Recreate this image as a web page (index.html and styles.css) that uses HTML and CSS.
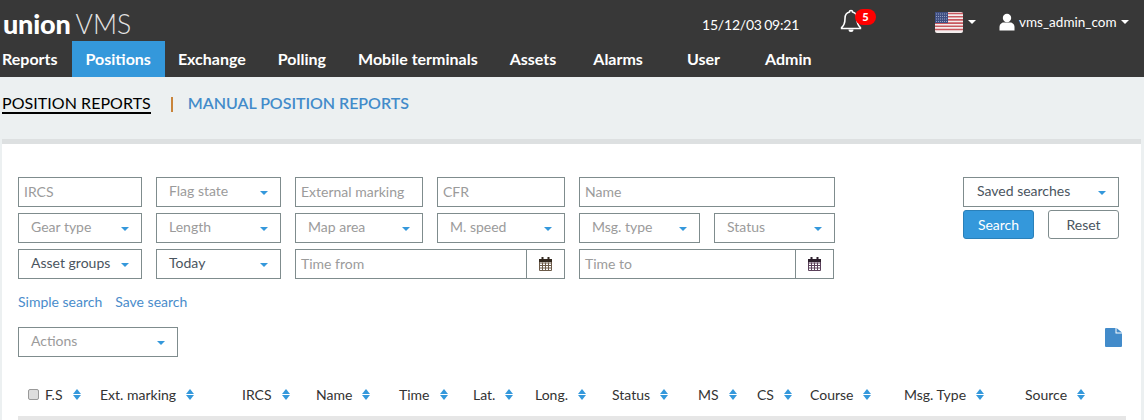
FILE: index.html
```html
<!DOCTYPE html>
<html lang="en">
<head>
<meta charset="utf-8">
<title>Union VMS</title>
<link rel="stylesheet" href="styles.css">
</head>
<body>
<header class="header">
  <div class="topbar">
    <div class="logo"><span class="logo-bold">union</span><span class="logo-light">VMS</span></div>
    <div class="clock">15/12/03 09:21</div>
    <div class="bell">
      <svg width="22" height="24" viewBox="0 0 22 24"><path d="M11 1.500c-1 0-1.600.7-1.600 1.500-3 .7-4.400 3.200-4.400 6.400 0 4.600-1 7-3.400 9.200v.9h18.800v-.9c-2.400-2.200-3.400-4.600-3.400-9.200 0-3.200-1.400-5.700-4.400-6.400 0-.8-.6-1.500-1.600-1.500z" fill="none" stroke="#fff" stroke-width="1.600"/><path d="M8.500 20.500a2.500 2.500 0 0 0 5 0z" fill="#fff"/></svg>
      <span class="badge">5</span>
    </div>
    <div class="flag">
      <svg width="28" height="21" viewBox="0 0 28 21"><rect width="28" height="21" rx="2" fill="#f4eeee"/><path d="M0 1.500h28M0 4.700h28M0 7.900h28M0 11.100h28M0 14.300h28M0 17.500h28" stroke="#c8585f" stroke-width="1.600"/><rect width="13" height="11" fill="#3f4f82"/><path d="M1 2h11M1 4.500h11M1 7h11M1 9.500h11" stroke="#9aa3c4" stroke-width="1" stroke-dasharray="1 1"/></svg>
      <span class="caret-white"></span>
    </div>
    <div class="user">
      <svg width="16" height="18" viewBox="0 0 16 18"><circle cx="8" cy="5" r="4.200" fill="#fff"/><path d="M0.500 17.500v-3.500c0-3 2.500-4.500 4-4.500h7c1.500 0 4 1.500 4 4.500v3.500z" fill="#fff"/></svg>
      <span class="user-name">vms_admin_com</span>
      <span class="caret-white"></span>
    </div>
  </div>
  <nav class="nav">
    <a class="nav-item nav-first">Reports</a>
    <a class="nav-item nav-active">Positions</a>
    <a class="nav-item nav-exchange">Exchange</a>
    <a class="nav-item">Polling</a>
    <a class="nav-item">Mobile terminals</a>
    <a class="nav-item">Assets</a>
    <a class="nav-item nav-alarms">Alarms</a>
    <a class="nav-item nav-user">User</a>
    <a class="nav-item nav-admin">Admin</a>
  </nav>
</header>

<div class="tabs">
  <a class="tab tab-active">POSITION REPORTS</a>
  <span class="tab-sep"></span>
  <a class="tab tab-link">MANUAL POSITION REPORTS</a>
</div>

<main class="panel">
  <div class="search">
    <div class="form-grid">
      <div class="field">IRCS</div>
      <div class="select"><span>Flag state</span><i class="caret"></i></div>
      <div class="field">External marking</div>
      <div class="field">CFR</div>
      <div class="field span-2">Name</div>

      <div class="select"><span>Gear type</span><i class="caret"></i></div>
      <div class="select"><span>Length</span><i class="caret"></i></div>
      <div class="select"><span>Map area</span><i class="caret"></i></div>
      <div class="select"><span>M. speed</span><i class="caret"></i></div>
      <div class="select"><span>Msg. type</span><i class="caret"></i></div>
      <div class="select"><span>Status</span><i class="caret"></i></div>

      <div class="select filled"><span>Asset groups</span><i class="caret"></i></div>
      <div class="select filled"><span>Today</span><i class="caret"></i></div>
      <div class="date span-2">
        <span class="date-text">Time from</span>
        <span class="date-btn"><svg width="13" height="14" viewBox="0 0 13 14"><path d="M.5 3.500h12v10H.500z M.5 6h12M.5 8.500h12M.5 11h12M3.500 5.500v8M6.500 5.500v8M9.500 5.500v8" fill="none" stroke="#6b5a48" stroke-width="1"/><rect x="0" y="2" width="13" height="3" fill="#33291f"/><rect x="2.500" y="0" width="2" height="3.500" fill="#33291f"/><rect x="8.500" y="0" width="2" height="3.500" fill="#33291f"/></svg></span>
      </div>
      <div class="date span-2 date-last">
        <span class="date-text">Time to</span>
        <span class="date-btn"><svg width="13" height="14" viewBox="0 0 13 14"><path d="M.5 3.500h12v10H.500z M.5 6h12M.5 8.500h12M.5 11h12M3.500 5.500v8M6.500 5.500v8M9.500 5.500v8" fill="none" stroke="#5a405a" stroke-width="1"/><rect x="0" y="2" width="13" height="3" fill="#2c1f2c"/><rect x="2.500" y="0" width="2" height="3.500" fill="#2c1f2c"/><rect x="8.500" y="0" width="2" height="3.500" fill="#2c1f2c"/></svg></span>
      </div>
    </div>
    <div class="side">
      <div class="select saved filled"><span>Saved searches</span><i class="caret"></i></div>
      <div class="buttons">
        <button class="btn btn-primary">Search</button>
        <button class="btn btn-default">Reset</button>
      </div>
    </div>
  </div>

  <div class="links">
    <a class="link">Simple search</a>
    <a class="link">Save search</a>
  </div>

  <div class="actions-row">
    <div class="select actions"><span>Actions</span><i class="caret"></i></div>
    <svg class="doc" width="17" height="19" viewBox="0 0 17 19"><path d="M1 0h9.500v5.500H17V18a1 1 0 0 1-1 1H1a1 1 0 0 1-1-1V1a1 1 0 0 1 1-1z M11.500 0L17 4.500h-5.500z" fill="#428bca"/></svg>
  </div>

  <div class="thead">
    <div class="th"><span class="check"></span>F.S<i class="sort"></i></div>
    <div class="th">Ext. marking<i class="sort"></i></div>
    <div class="th">IRCS<i class="sort"></i></div>
    <div class="th">Name<i class="sort"></i></div>
    <div class="th">Time<i class="sort"></i></div>
    <div class="th">Lat.<i class="sort"></i></div>
    <div class="th">Long.<i class="sort"></i></div>
    <div class="th">Status<i class="sort"></i></div>
    <div class="th">MS<i class="sort"></i></div>
    <div class="th">CS<i class="sort"></i></div>
    <div class="th">Course<i class="sort"></i></div>
    <div class="th">Msg. Type<i class="sort"></i></div>
    <div class="th">Source<i class="sort"></i></div>
  </div>
</main>
</body>
</html>
```
FILE: styles.css
```css
* { box-sizing: border-box; }
html, body { margin: 0; padding: 0; height: 420px; overflow: hidden; }
body { background: #ecf0f1; font-family: "Lato", "Liberation Sans", sans-serif; color: #2c3e50; font-size: 14px; }

.header { background: #383838; height: 77px; color: #fff; }
.topbar { height: 41px; display: flex; align-items: center; position: relative; }
.logo { margin-left: 3px; width: 699px; line-height: 41px; padding-top: 7px; white-space: nowrap; display: flex; align-items: baseline; gap: 5px; }
.logo-bold { font-size: 27px; font-weight: 900; letter-spacing: -0.2px; }
.logo-light { font-size: 26.500px; font-weight: 300; color: #e4e4e4; }
.clock { font-size: 14px; width: 138px; margin-top: 7px; letter-spacing: -0.2px; word-spacing: -1px; }
.bell { position: relative; width: 95px; height: 24px; margin-top: 0; }
.badge { position: absolute; left: 15px; top: 0; width: 21px; height: 16px; border-radius: 9px; background: #f00; color: #fff; font-size: 11px; font-weight: 900; text-align: center; line-height: 15px; }
.flag { width: 64px; display: flex; align-items: center; gap: 5px; margin-top: 3px; }
.caret-white { display: inline-block; width: 0; height: 0; border-left: 4px solid transparent; border-right: 4px solid transparent; border-top: 4px solid #fff; }
.user { display: flex; align-items: center; margin-top: 3px; }
.user-name { font-size: 13.500px; margin: 0 4px 0 4px; }

.nav { height: 36px; display: flex; }
.nav-item { display: block; padding: 0 16px; line-height: 36px; font-size: 16px; font-weight: 700; color: #fff; }
.nav-first { padding: 0 14px 0 2px; }
.nav-active { background: #3498db; padding: 0 14px; }
.nav-exchange { padding-left: 13px; }
.nav-alarms { margin-left: 5px; }
.nav-user { margin-left: 12px; }
.nav-admin { margin-left: 13px; }

.tabs { height: 62px; display: flex; align-items: flex-start; padding: 16px 0 0 2px; }
.tab { font-size: 16px; line-height: 19px; white-space: nowrap; }
.tab-active { color: #000; border-bottom: 2px solid #000; height: 21px; letter-spacing: 0.05px; }
.tab-sep { width: 2px; height: 15px; background: #c9843a; margin: 4px 15px 0 20px; }
.tab-link { color: #428bca; font-weight: 600; letter-spacing: -0.04px; }

.panel { margin: 0 3px 0 2px; background: #fff; border-top: 5px solid #dde0e1; height: 281px; padding: 33px 22px 0 16px; }
.search { display: flex; justify-content: space-between; }
.form-grid { display: grid; grid-template-columns: 124px 125px 128px 128px 121px 121px; grid-auto-rows: 30px; column-gap: 14px; row-gap: 6px; }
.span-2 { grid-column: span 2; }

.field, .select, .date { border: 1px solid #7f8c8d; height: 30px; font-size: 14px; color: #9b9b9b; background: #fff; }
.field { padding: 0 5px; line-height: 28px; }
.select { display: flex; align-items: center; justify-content: space-between; padding: 0 12px; line-height: 26px; padding-bottom: 2px; }
.filled { color: #4a5560; }
.caret { display: block; width: 0; height: 0; margin-top: 3px; border-left: 4px solid transparent; border-right: 4px solid transparent; border-top: 4px solid #3498db; }
.date { display: flex; }
.date-last { margin-right: 1px; }
.date-text { flex: 1; padding: 0 5px; line-height: 28px; }
.date-btn { width: 38px; border-left: 1px solid #7f8c8d; display: flex; align-items: center; justify-content: center; }

.side { width: 156px; }
.saved { width: 156px; padding-left: 13px; }
.buttons { display: flex; justify-content: space-between; margin-top: 3px; }
.btn { width: 71px; height: 29px; border-radius: 3px; font-family: inherit; font-size: 14px; padding: 0; }
.btn-primary { background: #3498db; border: 1px solid #2a80b9; color: #fff; }
.btn-default { background: #fff; border: 1px solid #7f8c8d; color: #4a5560; }

.links { margin-top: 14px; display: flex; gap: 13px; line-height: 18px; height: 18px; }
.link { color: #4a8ccb; font-size: 14px; }

.actions-row { display: flex; justify-content: space-between; margin-top: 16px; }
.actions { width: 160px; }
.doc { margin: 1px -3px 0 0; }

.thead { display: grid; grid-template-columns: 72px 142px 74px 83px 74px 62px 77px 86px 59px 53px 94px 121px 1fr; margin-top: 27px; padding: 0 0 11px 10px; border-bottom: 4px solid #e6e6e6; height: 36px; margin-right: -7px; }
.th { display: flex; align-items: center; font-size: 14px; color: #333; white-space: nowrap; height: 21px; }
.check { width: 11px; height: 11px; background: #ddd; border: 1px solid #999; border-radius: 2px; margin-right: 6px; }
.sort { position: relative; display: block; width: 8px; height: 11px; margin-left: 10px; }
.sort::before, .sort::after { content: ""; position: absolute; left: 0; width: 0; height: 0; border-left: 4px solid transparent; border-right: 4px solid transparent; }
.sort::before { top: 0; border-bottom: 5px solid #3498db; }
.sort::after { bottom: 0; border-top: 5px solid #3498db; }
```
